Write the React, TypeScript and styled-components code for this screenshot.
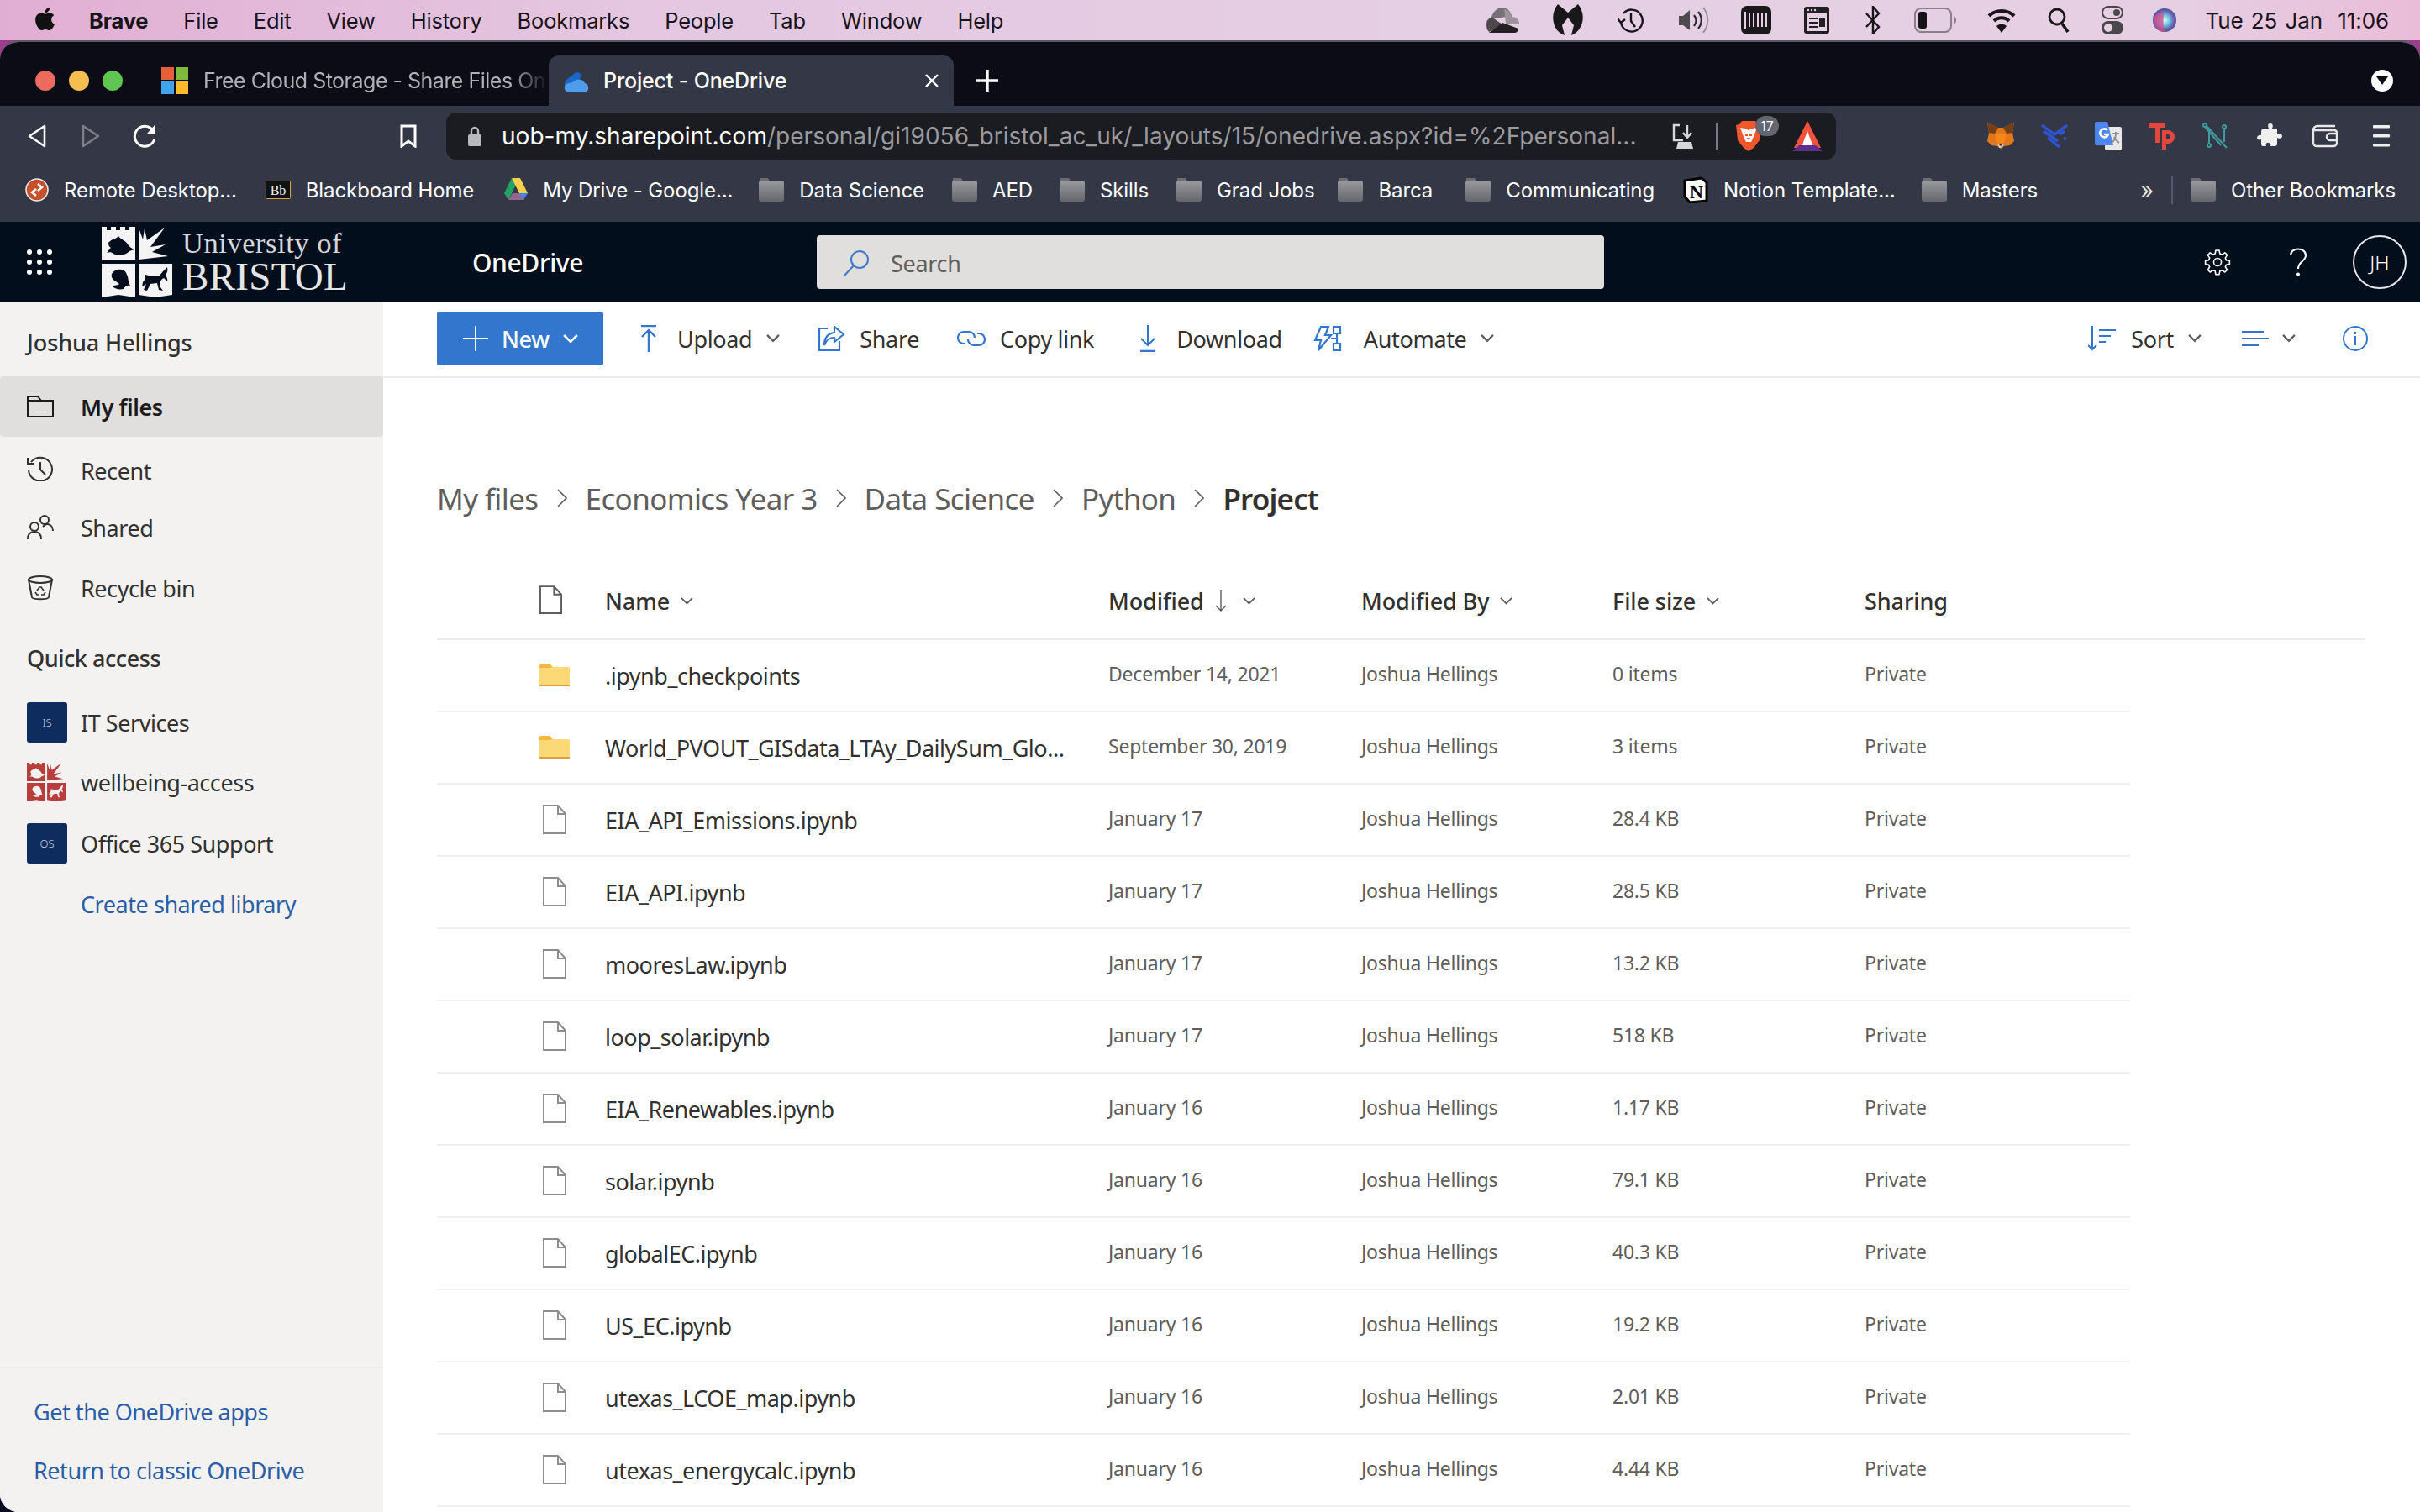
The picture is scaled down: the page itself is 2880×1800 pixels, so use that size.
import React from "react";
import styled, { createGlobalStyle } from "styled-components";
import { FaApple } from "react-icons/fa";

const ui = `"Noto Sans", "Open Sans", sans-serif`;
const sys = `Inter, "Liberation Sans", sans-serif`;
const blue = "#3376cd";

const Global = createGlobalStyle`
  html, body { margin: 0; padding: 0; background: #1a1030; }
  * { box-sizing: border-box; }
  svg { display: block; flex: none; }
`;

const Page = styled.div`
  width: 2880px; height: 1800px; overflow: hidden; display: flex; flex-direction: column;
  background: linear-gradient(180deg, #a23d92 0%, #0a0a22 100%);
`;
const MenuBar = styled.div`
  height: 48px; flex: none; display: flex; align-items: center; padding: 0 37px 0 40px;
  background: linear-gradient(90deg, #e1aed3 0%, #e4c6e0 25%, #e5cfe4 60%, #e6cfe3 90%, #e9bcd8 100%);
  color: #17131a; font: 400 25.5px ${sys};
`;
const AppleMark = styled.span`
  display: flex; width: 26px; margin-right: 40px; font-size: 31px; margin-top: -4px; color: #111; justify-content: center;
`;
const MenuItem = styled.span<{ $bold?: boolean }>`
  margin-right: 42px; font-weight: ${(p) => (p.$bold ? 700 : 400)}; letter-spacing: -0.2px;
`;
const StatusGroup = styled.div`
  margin-left: auto; display: flex; align-items: center;
`;
const StatusSlot = styled.span<{ $ml: number }>`
  display: flex; margin-left: ${(p) => p.$ml}px;
`;
const Clock = styled.span`
  margin-left: 34px; word-spacing: 2px; letter-spacing: -0.1px; font-size: 26px;
`;

const BrowserWindow = styled.div`
  flex: 1; min-height: 0; display: flex; flex-direction: column; overflow: hidden;
  border-radius: 22px 22px 0 22px; border-top: 2px solid #5a5a62; background: #fff;
`;
const TitleBar = styled.div`
  height: 76px; flex: none; background: #0b0c15; display: flex; align-items: flex-end; padding-left: 42px; position: relative;
`;
const Lights = styled.div`
  display: flex; gap: 16px; align-self: flex-end; margin: 0 46px 18px 0;
`;
const Light = styled.span<{ $c: string }>`
  width: 24px; height: 24px; border-radius: 50%; background: ${(p) => p.$c};
`;
const InactiveTab = styled.div`
  width: 461px; height: 60px; display: flex; align-items: center; gap: 18px; overflow: hidden;
  color: #b0b1b6; font: 400 25px ${sys}; white-space: nowrap; letter-spacing: -0.5px;
  mask-image: linear-gradient(90deg, #000 90%, transparent 100%);
`;
const ActiveTab = styled.div`
  width: 482px; height: 60px; background: #343746; border-radius: 12px 12px 0 0; display: flex; align-items: center;
  padding: 0 18px 0 17px; gap: 16px; color: #fff; font: 500 25px ${sys}; letter-spacing: -0.15px;
`;
const TabClose = styled.span`
  margin-left: auto; display: flex;
`;
const NewTab = styled.span`
  align-self: flex-end; margin: 0 0 17px 27px; display: flex;
`;
const ProfileDot = styled.span`
  position: absolute; right: 32px; top: 33px; width: 26px; height: 26px; border-radius: 50%; background: #fff;
  display: flex; align-items: center; justify-content: center;
`;
const NavBar = styled.div`
  height: 72px; flex: none; background: #343746; display: flex; align-items: center; position: relative;
`;
const NavSlot = styled.span<{ $w: number; $ml?: number }>`
  width: ${(p) => p.$w}px; margin-left: ${(p) => p.$ml ?? 0}px; display: flex; justify-content: center; align-items: center; flex: none;
`;
const AddressBar = styled.div`
  width: 1654px; height: 56px; margin-left: 30px; border-radius: 12px; background: #1b1c21; display: flex; align-items: center; flex: none;
  padding-left: 26px; font: 400 28px ${sys}; color: #9a9a9f; letter-spacing: 0.03px; white-space: nowrap;
`;
const UrlHost = styled.span`
  color: #fff; margin-left: 24px;
`;
const AddressTools = styled.span`
  margin-left: auto; display: flex; align-items: center; padding-right: 16px; gap: 22px;
`;
const Separator = styled.span`
  width: 2px; height: 32px; background: #777a85;
`;
const ShieldWrap = styled.span`
  position: relative; display: flex; margin: 0 15px 0 0;
`;
const ShieldBadge = styled.span`
  position: absolute; left: 23px; top: -6px; width: 28px; height: 24px; border-radius: 12px; background: #65666f; color: #fff;
  font: 400 16px ${sys}; display: flex; align-items: center; justify-content: center;
`;
const Exts = styled.div`
  display: flex; align-items: center; margin-left: 164px;
`;
const BookmarksBar = styled.div`
  height: 66px; flex: none; background: #343746; display: flex; align-items: center; padding: 0 29px 10px 30px;
  font: 400 24px ${sys}; color: #fff; letter-spacing: -0.1px; white-space: nowrap;
`;
const Bookmark = styled.span<{ $ml: number }>`
  display: flex; align-items: center; gap: 18px; margin-left: ${(p) => p.$ml}px;
`;
const MoreMark = styled.span`
  margin-left: auto; font-size: 26px; color: #e8e8e8;
`;
const BookmarkDivider = styled.span`
  width: 2px; height: 34px; background: #55586a; margin: 0 21px 0 21px;
`;
const AppHeader = styled.header`
  height: 96px; flex: none; background: #030e1c; display: flex; align-items: center; position: relative; color: #fff;
`;
const Waffle = styled.div`
  display: grid; grid-template-columns: repeat(3, 6px); gap: 6px; margin-left: 32px; flex: none;
`;
const WaffleDot = styled.span`
  width: 6px; height: 6px; border-radius: 50%; background: #fff;
`;
const LogoBox = styled.div`
  display: flex; align-items: center; margin-left: 59px; gap: 12px; flex: none; width: 441px;
`;
const LogoText = styled.div`
  display: flex; flex-direction: column; font-family: "Liberation Serif", serif; color: #d5d7da; line-height: 1; white-space: nowrap;
`;
const LogoTop = styled.span`
  font-size: 34.5px; letter-spacing: 0.55px; height: 34px;
`;
const LogoBottom = styled.span`
  font-size: 47px; letter-spacing: 0.3px; color: #e4e5e7; height: 46px;
`;
const ProductName = styled.div`
  font: 500 30px ${ui}; letter-spacing: -0.4px; width: 410px;
`;
const SearchBox = styled.div`
  width: 937px; height: 64px; background: #e1dfdd; border-radius: 4px; display: flex; align-items: center; padding: 2px 0 0 31px; gap: 25px;
  color: #605e5c; font: 400 27px ${ui}; flex: none; letter-spacing: -0.3px;
`;
const HeaderTools = styled.div`
  margin-left: auto; display: flex; align-items: center; padding-right: 16px;
`;
const Avatar = styled.span`
  width: 64px; height: 64px; border-radius: 50%; border: 2px solid #e6e8ea; display: flex; align-items: center; justify-content: center;
  font: 300 24px ${ui}; margin-left: 54px;
`;
const HeaderIcon = styled.span<{ $ml?: number }>`
  display: flex; margin-left: ${(p) => p.$ml ?? 0}px;
`;

const Body = styled.div`
  flex: 1; min-height: 0; display: flex; background: #fff;
`;
const Sidebar = styled.aside`
  width: 456px; flex: none; background: #f3f2f1; display: flex; flex-direction: column; font-family: ${ui};
  color: #323130; font-size: 27px; letter-spacing: -0.45px;
`;
const UserName = styled.div`
  height: 88px; padding: 7px 0 0 32px; display: flex; align-items: center; font-weight: 500; font-size: 27px; letter-spacing: -0.1px;
`;
const NavRow = styled.div<{ $mt?: number; $active?: boolean }>`
  height: ${(p) => (p.$active ? 72 : 68)}px; margin-top: ${(p) => p.$mt ?? 0}px; display: flex; align-items: center;
  background: ${(p) => (p.$active ? "#e1dfdd" : "transparent")}; border-radius: ${(p) => (p.$active ? "4px" : "0")};
  font-weight: ${(p) => (p.$active ? 600 : 400)}; color: ${(p) => (p.$active ? "#1b1a19" : "#323130")};
`;
const NavIconBox = styled.span<{ $up?: number }>`
  width: 96px; flex: none; padding-left: 32px; display: flex; margin-top: ${(p) => -(p.$up ?? 0)}px;
`;
const SectionTitle = styled.div`
  height: 50px; margin-top: 24px; padding-left: 32px; display: flex; align-items: center; font-weight: 500;
`;
const SiteTile = styled.span`
  width: 48px; height: 48px; border-radius: 3px; background: #0f2c5e; color: #c5cede; font-size: 13px; font-weight: 300;
  display: flex; align-items: center; justify-content: center; letter-spacing: 0;
`;
const SideLink = styled.span`
  color: #2a5ea6;
`;
const CreateRow = styled.div`
  height: 68px; margin-top: 4px; padding-left: 96px; display: flex; align-items: center;
`;
const SideFooter = styled.div`
  margin-top: auto; height: 173px; border-top: 2px solid #edebe9; padding: 33px 0 0 40px; display: flex; flex-direction: column; gap: 32px;
  line-height: 38px;
`;
const Main = styled.main`
  flex: 1; min-width: 0; display: flex; flex-direction: column; font-family: ${ui}; color: #323130;
`;
const Toolbar = styled.div`
  height: 90px; flex: none; border-bottom: 2px solid #edebe9; display: flex; align-items: center; padding: 0 62px 2px 64px;
  font-size: 27px; letter-spacing: -0.35px;
`;
const NewButton = styled.div`
  width: 198px; height: 64px; background: ${blue}; border-radius: 3px; display: flex; align-items: center; color: #fff; padding-left: 31px; gap: 16px; font-weight: 500; flex: none;
`;
const ToolButton = styled.div<{ $ml: number; $gap?: number }>`
  display: flex; align-items: center; margin-left: ${(p) => p.$ml}px; gap: ${(p) => p.$gap ?? 17}px; flex: none;
`;
const Chevron = styled.span<{ $ml?: number }>`
  display: flex; margin-left: ${(p) => p.$ml ?? 0}px;
`;
const ToolSpacer = styled.span`
  flex: 1;
`;
const Breadcrumbs = styled.nav`
  height: 226px; flex: none; padding: 60px 0 0 64px; display: flex; align-items: center; font-size: 35px; color: #605e5c; letter-spacing: -0.6px;
`;
const CrumbChevron = styled.span`
  display: flex; width: 56px; justify-content: center;
`;
const CrumbCurrent = styled.span`
  color: #323130; font-weight: 600; letter-spacing: -0.85px;
`;
const Grid = styled.div`
  display: grid; grid-template-columns: 200px 599px 301px 299px 300px 1fr; align-items: center;
`;
const HeadRow = styled(Grid)`
  width: 2295px; height: 88px; margin: -2px 0 0 64px; border-bottom: 2px solid #edebe9; font-weight: 500; font-size: 27px; letter-spacing: -0.1px;
  flex: none; padding-bottom: 4px;
`;
const HeadCell = styled.div`
  display: flex; align-items: center; gap: 13px;
`;
const Row = styled(Grid)`
  width: 2015px; height: 86px; margin-left: 64px; border-bottom: 2px solid #f1f0ef; flex: none;
`;
const IconCell = styled.div<{ $pl: number }>`
  padding-left: ${(p) => p.$pl}px; display: flex; padding-bottom: 2px;
`;
const NameCell = styled.div`
  font-size: 27px; color: #323130; letter-spacing: -0.48px; white-space: nowrap;
`;
const MetaCell = styled.div`
  font-size: 23px; color: #605e5c; padding-bottom: 5px; letter-spacing: -0.22px; white-space: nowrap;
`;

/* ---------- drawings ---------- */
const Crest = ({ w, fg, bg }: { w: number; fg: string; bg: string }) => (
  <svg width={w} height={w} viewBox="0 0 84 84">
    <path fill={fg} d="M0 0h6v4h5V0h6v4h5V0h6v4h5V0h7v40H0z" />
    <path fill={bg} d="M8 19c4-5 9-4 12-8 2 4 9 5 11 10 2 3 5 5 8 6l-6 2c-4 5-14 6-19 3-2-2-5-2-8-1 3-3 3-5 5-6-2-1-3-3-3-6z" />
    <path fill={fg} d="M44 1l5 14 2-13 3 14L75 1 58 24l18-3-16 9 19 5-35 4z" />
    <path fill={fg} d="M0 44h40v40l-20-3-20 3z" />
    <path fill={bg} d="M12 56c4-7 16-7 18 1 2 3 1 8 4 13-4-1-6 1-8 4-5 1-10 0-13-3 2-2 7-1 8-3-3-3-11-5-9-12z" />
    <path fill={fg} d="M44 44h40v37l-20 3-20-3z" />
    <path fill={bg} d="M52 57l8 2 9-1 4-5 5-5c1 4 0 7-2 9 1 3 3 5 2 8l-4-4c-4 2-5 5-4 11l3 4-5-1-2-8-8 1-4 8-4-1 3-7-5 3 1-5 3-4z" />
  </svg>
);
const MsIcon = () => (
  <svg width="32" height="32" viewBox="0 0 32 32"><rect width="15" height="15" fill="#e5603a" /><rect x="17" width="15" height="15" fill="#7fb93b" /><rect y="17" width="15" height="15" fill="#3ea5ec" /><rect x="17" y="17" width="15" height="15" fill="#fbbb2c" /></svg>
);
const OneDriveFav = () => (
  <svg width="32" height="32" viewBox="0 0 32 32"><path fill="#1b67c8" d="M2 22C1 14 9 12 11 10c3-5 9-5 11 0l-8 14H5z" /><path fill="#4e9dec" d="M8 30c-5 0-8-5-5-9 3-3 8-2 10-4 4-4 11-3 13 2 5 1 6 8 1 11z" /></svg>
);
const Cloud = () => (
  <svg width="40" height="32" viewBox="0 0 40 32"><path fill="#777077" d="M6 15C8 8 12 1 20 1c6 0 10 5 11 10z" /><path fill="#9c939b" d="M22 3c5 0 8 4 9 9 5 0 9 3 9 8H24z" /><path fill="#4e484d" d="M1 21c0-5 3-8 7-8l12 8-16 9c-2-2-3-5-3-9z" /><path fill="#231f22" d="M4 31l16-12 19 7c0 3-2 5-5 5z" /></svg>
);
const Malware = () => (
  <svg width="36" height="38" viewBox="0 0 36 38"><path fill="#1a171a" d="M6 0l12 10L30 0c5 6 7 14 5 22-2 7-7 13-13 15l3-12-7-9-7 9 3 12C8 35 2 29 1 22-1 14 1 6 6 0z" /></svg>
);
const TimeMachine = () => (
  <svg width="32" height="32" viewBox="0 0 32 32" fill="none" stroke="#18151a" strokeWidth="2.4"><path d="M7 8a13 13 0 1 1-3 11" /><path d="M0 14l4 5 5-4" /><path d="M16 8v9l5 7" /></svg>
);
const Volume = () => (
  <svg width="36" height="32" viewBox="0 0 36 32" fill="none"><path fill="#4e4a50" d="M0 11h5l8-7v24l-8-6H0z" /><path stroke="#2c2930" strokeWidth="2.2" d="M18 10c3 4 3 9 0 13M23 6c5 6 5 14 0 20" /><path stroke="#9a929c" strokeWidth="2" d="M29 1c7 9 7 21 0 30" /></svg>
);
const KeyMeter = () => (
  <svg width="36" height="34" viewBox="0 0 36 34"><rect width="36" height="34" rx="7" fill="#1b181b" /><rect x="3" y="7" width="3" height="20" fill="#e6cfe3" /><path stroke="#e6cfe3" strokeWidth="2" d="M10 9v16M15 9v16M20 9v16M25 9v16M30 9v16" /></svg>
);
const MenuWin = () => (
  <svg width="30" height="32" viewBox="0 0 30 32"><rect width="30" height="32" rx="3" fill="#221f22" /><rect x="3" y="8" width="24" height="21" fill="#e6cfe3" /><path stroke="#221f22" strokeWidth="2" d="M6 14h10M6 19h10M6 24h10" /><rect x="18" y="14" width="7" height="10" fill="#221f22" /><circle cx="5" cy="4" r="1.2" fill="#e6cfe3" /><circle cx="9" cy="4" r="1.2" fill="#e6cfe3" /><circle cx="13" cy="4" r="1.2" fill="#e6cfe3" /></svg>
);
const Bt = () => (
  <svg width="18" height="34" viewBox="0 0 18 34" fill="none" stroke="#18151a" strokeWidth="2.4"><path d="M1 9l15 16-7 8V1l7 8L1 25" /></svg>
);
const Battery = () => (
  <svg width="50" height="30" viewBox="0 0 50 30"><rect x="1" y="1" width="43" height="28" rx="7" fill="none" stroke="#8a7e89" strokeWidth="2" /><rect x="5" y="5" width="10" height="20" rx="3" fill="#171417" /><path fill="#8a7e89" d="M47 10c2 1 3 3 3 5s-1 4-3 5z" /></svg>
);
const Wifi = () => (
  <svg width="34" height="30" viewBox="0 0 34 30" fill="none" stroke="#18151a" strokeWidth="4"><path d="M2 10c8-8 22-8 30 0M8 16c5-5 13-5 18 0" /><path fill="#18151a" stroke="none" d="M17 30l-6-8c3-3 9-3 12 0z" /></svg>
);
const SearchMac = () => (
  <svg width="26" height="32" viewBox="0 0 26 32" fill="none" stroke="#18151a"><circle cx="11" cy="12" r="9" strokeWidth="2.8" /><path strokeWidth="3.6" d="M17 20l7 10" /></svg>
);
const Control = () => (
  <svg width="26" height="34" viewBox="0 0 26 34"><rect x="1" y="1" width="24" height="14" rx="7" fill="#e6cfe3" stroke="#4b464b" strokeWidth="2" /><circle cx="18" cy="8" r="4" fill="#4b464b" /><rect y="18" width="26" height="16" rx="8" fill="#4b464b" /><circle cx="8" cy="26" r="5" fill="#e6cfe3" /></svg>
);
const Siri = () => (
  <svg width="28" height="32" viewBox="0 0 28 32"><defs><radialGradient id="siri"><stop offset="0" stopColor="#eef6ff" /><stop offset="0.45" stopColor="#5dc7d8" /><stop offset="0.75" stopColor="#7a5fc0" /><stop offset="1" stopColor="#3a5a88" /></radialGradient></defs><circle cx="14" cy="16" r="14" fill="url(#siri)" /><path fill="#d94d8b" opacity="0.75" d="M2 12c4-5 8-6 11-4 0 8-2 15 2 22C6 30 0 22 2 12z" /></svg>
);
const Back = ({ c }: { c: string }) => (
  <svg width="22" height="28" viewBox="0 0 22 28" fill="none" stroke={c} strokeWidth="2.6" strokeLinejoin="round"><path d="M20 2v24L2 14z" /></svg>
);
const Forward = ({ c }: { c: string }) => (
  <svg width="22" height="28" viewBox="0 0 22 28" fill="none" stroke={c} strokeWidth="2.6" strokeLinejoin="round"><path d="M2 2v24l18-12z" /></svg>
);
const Reload = () => (
  <svg width="30" height="30" viewBox="0 0 30 30" fill="none" stroke="#fff" strokeWidth="3"><path d="M25 8a12 12 0 1 0 2 10" /><path fill="#fff" stroke="none" d="M28 1v11H18z" /></svg>
);
const BookmarkIcon = () => (
  <svg width="22" height="28" viewBox="0 0 22 28" fill="none" stroke="#fff" strokeWidth="3"><path d="M3 2h16v24l-8-6-8 6z" /></svg>
);
const Lock = () => (
  <svg width="16" height="24" viewBox="0 0 16 24"><path fill="none" stroke="#b9b9bd" strokeWidth="2.4" d="M4 11V6a4 4 0 0 1 8 0v5" /><rect y="10" width="16" height="14" rx="2" fill="#b9b9bd" /></svg>
);
const InstallIcon = () => (
  <svg width="30" height="30" viewBox="0 0 30 30" fill="none" stroke="#d6d6d8" strokeWidth="2.4"><path d="M9 2H2v18h11M18 2v14M13 11l5 6 5-6" /><path fill="#d6d6d8" stroke="none" d="M7 22h16l2 8H5z" /></svg>
);
const BraveLion = () => (
  <svg width="30" height="36" viewBox="0 0 30 36"><path fill="#f1572a" d="M7 0h16l3 4 4 1-2 18-7 9-6 4-6-4-7-9L0 5l4-1z" /><path fill="#fff" d="M5 8l6 1 4 2 4-2 6-1-3 8-2 5-2 4h-6l-2-4-2-5z" /><path fill="#f1572a" d="M11 15h3v3h-3zM16 15h3v3h-3zM13 20h4l-2 3z" /></svg>
);
const BraveTri = () => (
  <svg width="36" height="36" viewBox="0 0 36 36"><path fill="#f0533a" d="M18 0l16 32H2z" /><path fill="#fff" d="M18 12l7 19H11z" /><path fill="#5c2f91" d="M0 36l8-7h20l8 7z" /></svg>
);
const Fox = () => (
  <svg width="32" height="32" viewBox="0 0 32 32"><path fill="#e2761b" d="M0 0l13 6h6L32 0l-2 12 2 10-5 5-7 1-4 3-4-3-7-1-5-5 2-10z" /><path fill="#763d16" d="M0 0l13 6-4 7-7-1zM32 0L19 6l4 7 7-1z" /><path fill="#f6851b" d="M9 13h14l-3 11h-8z" /><path fill="#d7c1b3" d="M12 25h8l-2 5h-4z" /><path fill="#233447" d="M14 26h4l-2 2z" /></svg>
);
const Chevrons = () => (
  <svg width="32" height="30" viewBox="0 0 32 30" fill="none" stroke="#2f55d4" strokeWidth="3.4"><path d="M1 2l15 11L31 2M3 9l17 12M8 17l14 11M28 9l-6 4M30 17l-3 2" /></svg>
);
const Translate = () => (
  <svg width="32" height="34" viewBox="0 0 32 34"><rect x="12" y="6" width="20" height="28" rx="2" fill="#e8e8e8" /><path fill="#4d86ec" d="M0 2a2 2 0 0 1 2-2h13l7 28H2a2 2 0 0 1-2-2z" /><path fill="none" stroke="#fff" strokeWidth="2.6" d="M15 10a5 5 0 1 0 1 5h-5" /><path fill="none" stroke="#8a8f96" strokeWidth="1.8" d="M21 14h8M25 12v2c0 5-2 9-5 11M23 18c1 3 3 5 6 7" /></svg>
);
const TpIcon = () => (
  <svg width="30" height="32" viewBox="0 0 30 32"><path fill="#e2483d" d="M0 0h19v6h-6v18H7V6H0z" /><path fill="#e2483d" fillRule="evenodd" d="M15 9h7a8 8 0 0 1 0 16h-2v7h-5zM20 14v6h2a3 3 0 0 0 0-6z" /></svg>
);
const NIcon = () => (
  <svg width="32" height="32" viewBox="0 0 32 32" fill="none" stroke="#3e9b9e" strokeWidth="2"><circle cx="3" cy="3" r="2" /><circle cx="26" cy="5" r="2" /><circle cx="8" cy="27" r="2" /><path d="M5 4l24 26M8 25V8M26 7v16M3 5l19 22" /></svg>
);
const Puzzle = () => (
  <svg width="30" height="30" viewBox="0 0 30 30"><path fill="#efefef" d="M9 6h5c-2-5 0-6 2-6s4 2 2 6h6v7c4-2 6 0 6 2s-2 4-6 2v7a3 3 0 0 1-3 3h-5c1-3-1-4-3-4s-3 1-2 4H7a2 2 0 0 1-2-2v-6c-3 1-5 0-5-2s3-4 5-3v-4a4 4 0 0 1 4-4z" /></svg>
);
const Wallet = () => (
  <svg width="32" height="28" viewBox="0 0 32 28" fill="none" stroke="#e8e8e8" strokeWidth="2.4"><path d="M28 2H7a5 5 0 0 0-5 5v15a4 4 0 0 0 4 4h20a4 4 0 0 0 4-4V10a3 3 0 0 0-3-3H3" /><path d="M31 11H22a4 4 0 0 0 0 8h9" /></svg>
);
const Burger = () => (
  <svg width="20" height="26" viewBox="0 0 20 26" fill="#eee"><rect width="20" height="3.4" rx="1" /><rect y="11" width="20" height="3.4" rx="1" /><rect y="22" width="20" height="3.4" rx="1" /></svg>
);
const RdpIcon = () => (
  <svg width="28" height="28" viewBox="0 0 28 28"><circle cx="14" cy="14" r="13" fill="#c64f2c" stroke="#e8e8e8" strokeWidth="1.6" /><path fill="none" stroke="#fff" strokeWidth="2.6" d="M15 7l5 4-5 4M13 13l-5 4 5 4" /></svg>
);
const BbIcon = () => (
  <svg width="30" height="22" viewBox="0 0 30 22"><rect x="0.5" y="0.5" width="29" height="21" rx="1" fill="#111" stroke="#d7a83f" /><text x="15" y="17" textAnchor="middle" fill="#f3f3f3" fontFamily="Liberation Serif" fontSize="16">Bb</text></svg>
);
const DriveIcon = () => (
  <svg width="28" height="28" viewBox="0 0 28 28"><path fill="#1fa463" d="M9 0L0 18l5 8 9-18z" /><path fill="#ffd04b" d="M9 0h10l9 18H18z" /><path fill="#4285f4" d="M5 26h18l5-8H10z" /><path fill="#d9523f" d="M5 26l5-8h8l5 8z" opacity="0.55" /></svg>
);
const FolderMac = () => (
  <svg width="30" height="28" viewBox="0 0 30 28"><defs><linearGradient id="fm" x1="0" x2="0" y1="0" y2="1"><stop offset="0" stopColor="#9a9b9f" /><stop offset="1" stopColor="#65666b" /></linearGradient></defs><path fill="#6c6d72" d="M1 0h10l2 4h-12z" /><rect y="3" width="30" height="25" rx="3" fill="url(#fm)" /></svg>
);
const NotionIcon = () => (
  <svg width="30" height="32" viewBox="0 0 30 32"><path fill="#fff" stroke="#000" strokeWidth="3" d="M2 5l20-3 6 5v22l-20 2-6-7z" /><text x="16" y="26" textAnchor="middle" fontFamily="Liberation Serif" fontWeight="700" fontSize="22" fill="#000">N</text></svg>
);
const SearchIcon = ({ c }: { c: string }) => (
  <svg width="32" height="32" viewBox="0 0 32 32" fill="none" stroke={c} strokeWidth="2"><circle cx="20" cy="12" r="10" /><path d="M13 19L2 31" /></svg>
);
const Gear = () => (
  <svg width="32" height="32" viewBox="0 0 24 24" fill="none" stroke="#fff" strokeWidth="1.2" strokeLinejoin="round"><path d="M10.5 1.5h3l.6 3 1.9.8 2.6-1.7 2.1 2.1-1.7 2.6.8 1.9 3 .6v3l-3 .6-.8 1.9 1.7 2.6-2.1 2.1-2.6-1.7-1.9.8-.6 3h-3l-.6-3-1.9-.8-2.6 1.7-2.1-2.1 1.7-2.6-.8-1.9-3-.6v-3l3-.6.8-1.9-1.7-2.6 2.1-2.1 2.6 1.7 1.9-.8z" /><circle cx="12" cy="12" r="3.4" /></svg>
);
const Question = () => (
  <svg width="22" height="34" viewBox="0 0 22 34" fill="none" stroke="#fff" strokeWidth="2"><path d="M2 9c0-10 18-10 18 0 0 7-9 7-9 16" /><circle cx="11" cy="31.5" r="1" fill="#fff" /></svg>
);
const FolderOutline = () => (
  <svg width="32" height="26" viewBox="0 0 32 26" fill="none" stroke="#1b1a19" strokeWidth="2"><path d="M1 25V1h12l4 5h14v19zM1 6h16" /></svg>
);
const History = () => (
  <svg width="32" height="32" viewBox="0 0 32 32" fill="none" stroke="#323130" strokeWidth="2"><path d="M5 9a14 14 0 1 1-3 9" /><path d="M1 4v7h7M16 9v9l6 6" /></svg>
);
const People = () => (
  <svg width="32" height="32" viewBox="0 0 32 32" fill="none" stroke="#323130" strokeWidth="2"><circle cx="21" cy="8" r="5" /><circle cx="9" cy="16" r="5" /><path d="M1 31c0-6 3-9 8-9s8 3 8 9M19 16c2-2 3-3 5-3 4 0 7 3 7 8" /></svg>
);
const Recycle = () => (
  <svg width="32" height="32" viewBox="0 0 32 32" fill="none" stroke="#323130" strokeWidth="2"><ellipse cx="16" cy="6" rx="14" ry="4" /><path d="M2 6l4 21c1 3 19 3 20 0l4-21" /><path strokeWidth="1.6" d="M12 19l3-4 2 0 3 4M10 21l2 3h3M22 21l-2 3h-3" /></svg>
);
const Plus = () => (
  <svg width="30" height="30" viewBox="0 0 30 30" stroke="#fff" strokeWidth="2"><path d="M15 0v30M0 15h30" /></svg>
);
const Chev = ({ c = "#605e5c", w = 2.6, s = 18 }: { c?: string; w?: number; s?: number }) => (
  <svg width={s} height={s * 0.6} viewBox="0 0 18 11" fill="none" stroke={c} strokeWidth={w}><path d="M1 1l8 8 8-8" /></svg>
);
const UploadIcon = () => (
  <svg width="34" height="32" viewBox="0 0 34 32" fill="none" stroke={blue} strokeWidth="2"><path strokeWidth="2.4" d="M8 1h18M17 32V6M9 14l8-8 8 8" /></svg>
);
const ShareIcon = () => (
  <svg width="34" height="30" viewBox="0 0 34 30" fill="none" stroke={blue} strokeWidth="2.2"><path d="M13 3H3v26h24V18" /><path d="M21 1l11 9-11 9v-5c-7 0-10 3-12 9 0-9 4-14 12-15z" /></svg>
);
const LinkIcon = () => (
  <svg width="34" height="24" viewBox="0 0 34 24" fill="none" stroke={blue} strokeWidth="2.2"><path d="M10 18H8A7 7 0 0 1 8 4h6a7 7 0 0 1 7 7" /><path d="M24 6h2a7 7 0 0 1 0 14h-6a7 7 0 0 1-7-7" /></svg>
);
const DownloadIcon = () => (
  <svg width="34" height="32" viewBox="0 0 34 32" fill="none" stroke={blue} strokeWidth="2"><path d="M17 0v24M9 16l8 8 8-8" /><path strokeWidth="2.6" d="M8 31h18" /></svg>
);
const AutomateIcon = () => (
  <svg width="34" height="30" viewBox="0 0 34 30" fill="none" stroke={blue} strokeWidth="2.2"><path d="M9 1h9l-4 10h7L6 29l3-12H2z" /><rect x="24" y="1" width="8" height="8" /><rect x="24" y="21" width="8" height="8" /><path d="M28 9v12M21 15h7" /></svg>
);
const SortIcon = () => (
  <svg width="34" height="30" viewBox="0 0 34 30" fill="none" stroke={blue} strokeWidth="2"><path d="M5 0v28M0 23l5 5 5-5" /><path strokeWidth="2" d="M13 5h20M13 12h14M13 19h8" /></svg>
);
const LinesIcon = () => (
  <svg width="32" height="20" viewBox="0 0 32 20" fill="none" stroke={blue} strokeWidth="2"><path d="M0 2h26M0 10h32M0 18h20" /></svg>
);
const InfoIcon = () => (
  <svg width="30" height="30" viewBox="0 0 30 30" fill="none" stroke={blue} strokeWidth="2"><circle cx="15" cy="15" r="14" /><path d="M15 12v11M15 7v3" /></svg>
);
const Down = () => (
  <svg width="14" height="26" viewBox="0 0 14 26" fill="none" stroke="#605e5c" strokeWidth="1.4"><path d="M7 0v25M1 19l6 6 6-6" /></svg>
);
const CrumbArrow = () => (
  <svg width="12" height="22" viewBox="0 0 12 22" fill="none" stroke="#605e5c" strokeWidth="1.6"><path d="M1 1l10 10L1 21" /></svg>
);
const FileIcon = ({ c = "#8f8d8b", w = 28, h = 35 }: { c?: string; w?: number; h?: number }) => (
  <svg width={w} height={h} viewBox="0 0 28 35" fill="none" stroke={c} strokeWidth="2"><path d="M1 1h17l9 10v23H1zM18 1v10h9" /></svg>
);
const FolderIcon = () => (
  <svg width="36" height="27" viewBox="0 0 36 27"><path fill="#f5b83d" d="M2 0h10l4 4-4 4H0V2a2 2 0 0 1 2-2z" /><path fill="#fbd976" d="M0 5h12l3-1h19a2 2 0 0 1 2 2v19H0z" /><rect y="25" width="36" height="2" fill="#e59c3a" /></svg>
);

const menu = ["File", "Edit", "View", "History", "Bookmarks", "People", "Tab", "Window", "Help"];
const status: [React.ReactNode, number][] = [
  [<Cloud />, 0], [<Malware />, 40], [<TimeMachine />, 41], [<Volume />, 41], [<KeyMeter />, 38], [<MenuWin />, 39],
  [<Bt />, 43], [<Battery />, 40], [<Wifi />, 37], [<SearchMac />, 38], [<Control />, 38], [<Siri />, 35],
];
const marks: { ic: React.ReactNode; t: string; ml: number }[] = [
  { ic: <RdpIcon />, t: "Remote Desktop...", ml: 0 },
  { ic: <BbIcon />, t: "Blackboard Home", ml: 34 },
  { ic: <DriveIcon />, t: "My Drive - Google...", ml: 36 },
  { ic: <FolderMac />, t: "Data Science", ml: 31 },
  { ic: <FolderMac />, t: "AED", ml: 33 },
  { ic: <FolderMac />, t: "Skills", ml: 32 },
  { ic: <FolderMac />, t: "Grad Jobs", ml: 33 },
  { ic: <FolderMac />, t: "Barca", ml: 28 },
  { ic: <FolderMac />, t: "Communicating", ml: 39 },
  { ic: <NotionIcon />, t: "Notion Template...", ml: 34 },
  { ic: <FolderMac />, t: "Masters", ml: 31 },
];
const J = "Joshua Hellings";
const rows: [string, string, string, boolean][] = [
  [".ipynb_checkpoints", "December 14, 2021", "0 items", true],
  ["World_PVOUT_GISdata_LTAy_DailySum_Glo...", "September 30, 2019", "3 items", true],
  ["EIA_API_Emissions.ipynb", "January 17", "28.4 KB", false],
  ["EIA_API.ipynb", "January 17", "28.5 KB", false],
  ["mooresLaw.ipynb", "January 17", "13.2 KB", false],
  ["loop_solar.ipynb", "January 17", "518 KB", false],
  ["EIA_Renewables.ipynb", "January 16", "1.17 KB", false],
  ["solar.ipynb", "January 16", "79.1 KB", false],
  ["globalEC.ipynb", "January 16", "40.3 KB", false],
  ["US_EC.ipynb", "January 16", "19.2 KB", false],
  ["utexas_LCOE_map.ipynb", "January 16", "2.01 KB", false],
  ["utexas_energycalc.ipynb", "January 16", "4.44 KB", false],
];

export default function App() {
  return (
    <Page>
      <Global />
      <MenuBar>
        <AppleMark><FaApple /></AppleMark>
        <MenuItem $bold>Brave</MenuItem>
        {menu.map((m) => <MenuItem key={m}>{m}</MenuItem>)}
        <StatusGroup>
          {status.map(([ic, ml], i) => <StatusSlot key={i} $ml={ml}>{ic}</StatusSlot>)}
          <Clock>Tue 25 Jan&nbsp; 11:06</Clock>
        </StatusGroup>
      </MenuBar>
      <BrowserWindow>
        <TitleBar>
          <Lights>
            <Light $c="#ed6a5e" /><Light $c="#f4bf4f" /><Light $c="#61c554" />
          </Lights>
          <InactiveTab><MsIcon />Free Cloud Storage - Share Files On</InactiveTab>
          <ActiveTab>
            <OneDriveFav />Project - OneDrive
            <TabClose><svg width="16" height="16" viewBox="0 0 16 16" stroke="#fff" strokeWidth="2.4"><path d="M1 1l14 14M15 1L1 15" /></svg></TabClose>
          </ActiveTab>
          <NewTab><svg width="26" height="26" viewBox="0 0 26 26" stroke="#fff" strokeWidth="3.4"><path d="M13 0v26M0 13h26" /></svg></NewTab>
          <ProfileDot><svg width="14" height="10" viewBox="0 0 14 10" fill="#0b0c15"><path d="M0 0h14L7 10z" /></svg></ProfileDot>
        </TitleBar>
        <NavBar>
          <NavSlot $w={30} $ml={29}><Back c="#fff" /></NavSlot>
          <NavSlot $w={30} $ml={34}><Forward c="#7c7e88" /></NavSlot>
          <NavSlot $w={30} $ml={34}><Reload /></NavSlot>
          <NavSlot $w={30} $ml={284}><BookmarkIcon /></NavSlot>
          <AddressBar>
            <Lock />
            <UrlHost>uob-my.sharepoint.com</UrlHost>/personal/gi19056_bristol_ac_uk/_layouts/15/onedrive.aspx?id=%2Fpersonal...
            <AddressTools>
              <InstallIcon /><Separator />
              <ShieldWrap><BraveLion /><ShieldBadge>17</ShieldBadge></ShieldWrap>
              <BraveTri />
            </AddressTools>
          </AddressBar>
          <Exts>
            <NavSlot $w={64}><Fox /></NavSlot>
            <NavSlot $w={64}><Chevrons /></NavSlot>
            <NavSlot $w={64}><Translate /></NavSlot>
            <NavSlot $w={64}><TpIcon /></NavSlot>
            <NavSlot $w={64}><NIcon /></NavSlot>
            <NavSlot $w={64}><Puzzle /></NavSlot>
            <NavSlot $w={68}><Wallet /></NavSlot>
            <NavSlot $w={66}><Burger /></NavSlot>
          </Exts>
        </NavBar>
        <BookmarksBar>
          {marks.map((b) => <Bookmark key={b.t} $ml={b.ml}>{b.ic}{b.t}</Bookmark>)}
          <MoreMark>»</MoreMark>
          <BookmarkDivider />
          <Bookmark $ml={0}><FolderMac />Other Bookmarks</Bookmark>
        </BookmarksBar>
        <AppHeader>
          <Waffle>{Array.from({ length: 9 }, (_, i) => <WaffleDot key={i} />)}</Waffle>
          <LogoBox>
            <Crest w={84} fg="#f4f4f4" bg="#030e1c" />
            <LogoText><LogoTop>University of</LogoTop><LogoBottom>BRISTOL</LogoBottom></LogoText>
          </LogoBox>
          <ProductName>OneDrive</ProductName>
          <SearchBox><SearchIcon c="#3f79c8" />Search</SearchBox>
          <HeaderTools>
            <HeaderIcon><Gear /></HeaderIcon>
            <HeaderIcon $ml={69}><Question /></HeaderIcon>
            <Avatar>JH</Avatar>
          </HeaderTools>
        </AppHeader>
        <Body>
          <Sidebar>
            <UserName>Joshua Hellings</UserName>
            <NavRow $active><NavIconBox><FolderOutline /></NavIconBox>My files</NavRow>
            <NavRow $mt={6}><NavIconBox $up={6}><History /></NavIconBox>Recent</NavRow>
            <NavRow><NavIconBox $up={2}><People /></NavIconBox>Shared</NavRow>
            <NavRow $mt={4}><NavIconBox><Recycle /></NavIconBox>Recycle bin</NavRow>
            <SectionTitle>Quick access</SectionTitle>
            <NavRow $mt={18}><NavIconBox><SiteTile>IS</SiteTile></NavIconBox>IT Services</NavRow>
            <NavRow $mt={3}><NavIconBox><Crest w={46} fg="#b93d3d" bg="#f3f2f1" /></NavIconBox>wellbeing-access</NavRow>
            <NavRow $mt={5}><NavIconBox><SiteTile>OS</SiteTile></NavIconBox>Office 365 Support</NavRow>
            <CreateRow><SideLink>Create shared library</SideLink></CreateRow>
            <SideFooter>
              <SideLink>Get the OneDrive apps</SideLink>
              <SideLink>Return to classic OneDrive</SideLink>
            </SideFooter>
          </Sidebar>
          <Main>
            <Toolbar>
              <NewButton><Plus />New<Chev c="#fff" /></NewButton>
              <ToolButton $ml={37}><UploadIcon />Upload<Chev s={16} /></ToolButton>
              <ToolButton $ml={44}><ShareIcon />Share</ToolButton>
              <ToolButton $ml={45}><LinkIcon />Copy link</ToolButton>
              <ToolButton $ml={47}><DownloadIcon />Download</ToolButton>
              <ToolButton $ml={37} $gap={26}><AutomateIcon />Automate<Chevron $ml={-9}><Chev s={16} /></Chevron></ToolButton>
              <ToolSpacer />
              <ToolButton $ml={0}><SortIcon />Sort<Chev s={16} /></ToolButton>
              <ToolButton $ml={48} $gap={16}><LinesIcon /><Chev s={16} /></ToolButton>
              <ToolButton $ml={56}><InfoIcon /></ToolButton>
            </Toolbar>
            <Breadcrumbs>
              My files<CrumbChevron><CrumbArrow /></CrumbChevron>
              Economics Year 3<CrumbChevron><CrumbArrow /></CrumbChevron>
              Data Science<CrumbChevron><CrumbArrow /></CrumbChevron>
              Python<CrumbChevron><CrumbArrow /></CrumbChevron>
              <CrumbCurrent>Project</CrumbCurrent>
            </Breadcrumbs>
            <HeadRow>
              <IconCell $pl={122}><FileIcon c="#605e5c" w={27} h={34} /></IconCell>
              <HeadCell>Name <Chev s={15} w={2.2} /></HeadCell>
              <HeadCell>Modified <Down /> <Chevron $ml={6}><Chev s={15} w={2.2} /></Chevron></HeadCell>
              <HeadCell>Modified By <Chev s={15} w={2.2} /></HeadCell>
              <HeadCell>File size <Chev s={15} w={2.2} /></HeadCell>
              <HeadCell>Sharing</HeadCell>
            </HeadRow>
            {rows.map((r) => (
              <Row key={r[0]}>
                <IconCell $pl={r[3] ? 122 : 126}>{r[3] ? <FolderIcon /> : <FileIcon />}</IconCell>
                <NameCell>{r[0]}</NameCell>
                <MetaCell>{r[1]}</MetaCell>
                <MetaCell>{J}</MetaCell>
                <MetaCell>{r[2]}</MetaCell>
                <MetaCell>Private</MetaCell>
              </Row>
            ))}
          </Main>
        </Body>
      </BrowserWindow>
    </Page>
  );
}
